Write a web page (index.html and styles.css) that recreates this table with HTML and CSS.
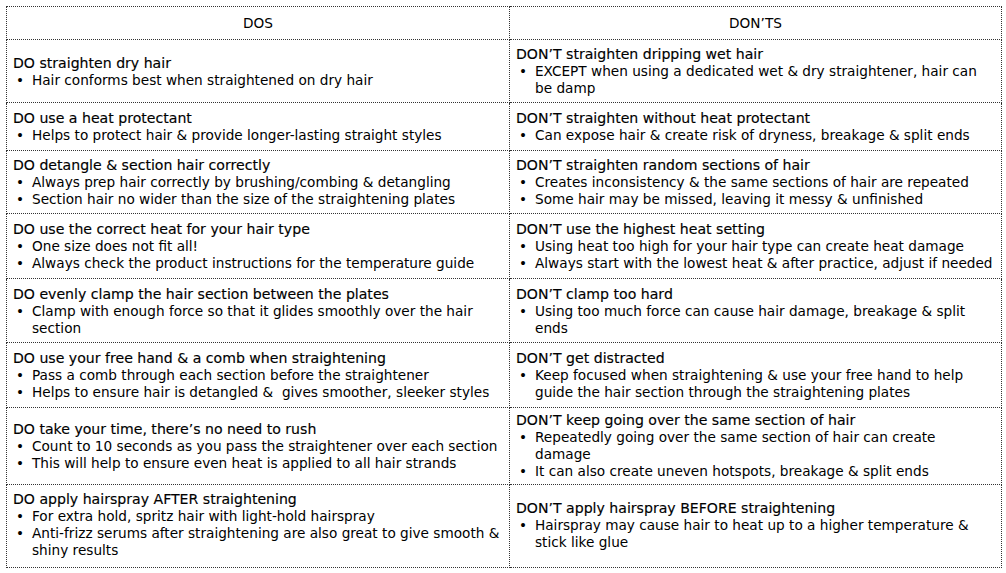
FILE: index.html
```html
<!DOCTYPE html>
<html>
<head>
<meta charset="utf-8">
<link rel="stylesheet" href="styles.css">
</head>
<body>
<table class="guide">
  <thead>
    <tr><th>DOS</th><th>DON’TS</th></tr>
  </thead>
  <tbody>
    <tr class="r1">
      <td><div class="t">DO straighten dry hair</div>
        <ul><li><span class="b">•</span><span>Hair conforms best when straightened on dry hair</span></li></ul></td>
      <td><div class="t">DON’T straighten dripping wet hair</div>
        <ul><li><span class="b">•</span><span>EXCEPT when using a dedicated wet &amp; dry straightener, hair can<br>be damp</span></li></ul></td>
    </tr>
    <tr class="r2">
      <td><div class="t">DO use a heat protectant</div>
        <ul><li><span class="b">•</span><span>Helps to protect hair &amp; provide longer-lasting straight styles</span></li></ul></td>
      <td><div class="t">DON’T straighten without heat protectant</div>
        <ul><li><span class="b">•</span><span>Can expose hair &amp; create risk of dryness, breakage &amp; split ends</span></li></ul></td>
    </tr>
    <tr class="r3">
      <td><div class="t">DO detangle &amp; section hair correctly</div>
        <ul><li><span class="b">•</span><span>Always prep hair correctly by brushing/combing &amp; detangling</span></li>
        <li><span class="b">•</span><span>Section hair no wider than the size of the straightening plates</span></li></ul></td>
      <td><div class="t">DON’T straighten random sections of hair</div>
        <ul><li><span class="b">•</span><span>Creates inconsistency &amp; the same sections of hair are repeated</span></li>
        <li><span class="b">•</span><span>Some hair may be missed, leaving it messy &amp; unfinished</span></li></ul></td>
    </tr>
    <tr class="r4">
      <td><div class="t">DO use the correct heat for your hair type</div>
        <ul><li><span class="b">•</span><span>One size does not fit all!</span></li>
        <li><span class="b">•</span><span>Always check the product instructions for the temperature guide</span></li></ul></td>
      <td><div class="t">DON’T use the highest heat setting</div>
        <ul><li><span class="b">•</span><span>Using heat too high for your hair type can create heat damage</span></li>
        <li><span class="b">•</span><span>Always start with the lowest heat &amp; after practice, adjust if needed</span></li></ul></td>
    </tr>
    <tr class="r5">
      <td><div class="t">DO evenly clamp the hair section between the plates</div>
        <ul><li><span class="b">•</span><span>Clamp with enough force so that it glides smoothly over the hair<br>section</span></li></ul></td>
      <td><div class="t">DON’T clamp too hard</div>
        <ul><li><span class="b">•</span><span>Using too much force can cause hair damage, breakage &amp; split<br>ends</span></li></ul></td>
    </tr>
    <tr class="r6">
      <td><div class="t">DO use your free hand &amp; a comb when straightening</div>
        <ul><li><span class="b">•</span><span>Pass a comb through each section before the straightener</span></li>
        <li><span class="b">•</span><span>Helps to ensure hair is detangled &amp;&nbsp; gives smoother, sleeker styles</span></li></ul></td>
      <td><div class="t">DON’T get distracted</div>
        <ul><li><span class="b">•</span><span>Keep focused when straightening &amp; use your free hand to help<br>guide the hair section through the straightening plates</span></li></ul></td>
    </tr>
    <tr class="r7">
      <td><div class="t">DO take your time, there’s no need to rush</div>
        <ul><li><span class="b">•</span><span>Count to 10 seconds as you pass the straightener over each section</span></li>
        <li><span class="b">•</span><span>This will help to ensure even heat is applied to all hair strands</span></li></ul></td>
      <td><div class="t">DON’T keep going over the same section of hair</div>
        <ul><li><span class="b">•</span><span>Repeatedly going over the same section of hair can create<br>damage</span></li>
        <li><span class="b">•</span><span>It can also create uneven hotspots, breakage &amp; split ends</span></li></ul></td>
    </tr>
    <tr class="r8">
      <td><div class="t">DO apply hairspray AFTER straightening</div>
        <ul><li><span class="b">•</span><span>For extra hold, spritz hair with light-hold hairspray</span></li>
        <li><span class="b">•</span><span>Anti-frizz serums after straightening are also great to give smooth &amp;<br>shiny results</span></li></ul></td>
      <td><div class="t">DON’T apply hairspray BEFORE straightening</div>
        <ul><li><span class="b">•</span><span>Hairspray may cause hair to heat up to a higher temperature &amp;<br>stick like glue</span></li></ul></td>
    </tr>
  </tbody>
</table>
</body>
</html>
```

FILE: styles.css
```css
html, body {
  margin: 0;
  padding: 0;
  background: #fff;
}
body {
  padding: 6px 4px 0 6px;
  font-family: "DejaVu Sans", "Open Sans", sans-serif;
  font-size: 13.65px;
  color: #000;
}
.guide {
  border-collapse: collapse;
  width: 996px;
  table-layout: fixed;
}
.guide th,
.guide td {
  border: 1px dotted #333;
  vertical-align: middle;
  text-align: left;
  padding: 6px 6px 5px 6px;
  line-height: 17px;
  white-space: nowrap;
}
.guide th:first-child,
.guide td:first-child {
  width: 490px;
}
.guide th {
  font-weight: 400;
  text-align: center;
  height: 21px;
}
.t {
  font-size: 14.1px;
  padding-top: 1px;
  -webkit-text-stroke: 0.15px #000;
}
ul {
  list-style: none;
  margin: 0;
  padding: 0;
}
li {
  display: flex;
}
.b {
  flex: 0 0 19px;
  padding-left: 3px;
  box-sizing: border-box;
}
.r2 td { padding-top: 6px; padding-bottom: 6px; }
.r4 td, .r6 td { padding-top: 6px; padding-bottom: 6px; }
.r5 td { padding-top: 6px; padding-bottom: 5px; }
.r1 td, .r3 td { padding-top: 5px; }
.r7 td { padding-top: 3px; padding-bottom: 4px; }
.r8 td { padding-bottom: 8px; padding-top: 5px; }
```
